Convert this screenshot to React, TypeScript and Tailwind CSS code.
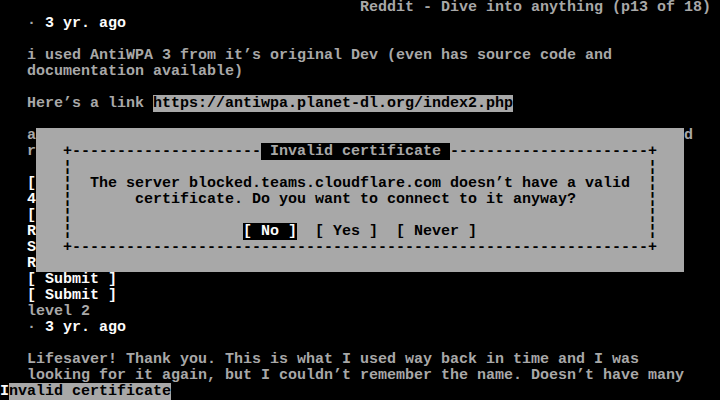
const dim = "text-[#a8a8a8]";
const bright = "text-[#fcfcfc]";

function Line({ children }: { children?: React.ReactNode }) {
  return <div className="h-4 leading-4 whitespace-pre">{children ?? " "}</div>;
}

const bar = "¦";

export default function App() {
  return (
    <div
      className={`relative w-[720px] h-[400px] overflow-hidden bg-black ${dim} text-[15px] font-bold`}
      style={{ fontFamily: '"Liberation Mono", "DejaVu Sans Mono", monospace' }}
    >
      {/* page text */}
      <Line>{" ".repeat(40)}Reddit - Dive into anything (p13 of 18)</Line>
      <Line>
        {"   · "}
        <span className={bright}>3 yr. ago</span>
      </Line>
      <Line />
      <Line>{"   i used AntiWPA 3 from it’s original Dev (even has source code and"}</Line>
      <Line>{"   documentation available)"}</Line>
      <Line />
      <Line>
        {"   Here’s a link "}
        <span className="bg-[#a8a8a8] text-black">https://antiwpa.planet-dl.org/index2.php</span>
      </Line>
      <Line />
      <Line>{"   a" + " ".repeat(72) + "d"}</Line>
      <Line>{"   r"}</Line>
      <Line />
      <Line><span className={bright}>{"   ["}</span></Line>
      <Line><span className={bright}>{"   4"}</span></Line>
      <Line><span className={bright}>{"   ["}</span></Line>
      <Line><span className={bright}>{"   R"}</span></Line>
      <Line><span className={bright}>{"   S"}</span></Line>
      <Line><span className={bright}>{"   R"}</span></Line>
      <Line><span className={bright}>{"   [ Submit ]"}</span></Line>
      <Line><span className={bright}>{"   [ Submit ]"}</span></Line>
      <Line>{"   level 2"}</Line>
      <Line>
        {"   · "}
        <span className={bright}>3 yr. ago</span>
      </Line>
      <Line />
      <Line>{"   Lifesaver! Thank you. This is what I used way back in time and I was"}</Line>
      <Line>{"   looking for it again, but I couldn’t remember the name. Doesn’t have many"}</Line>
      <Line>
        <span className="bg-black text-[#fcfcfc]">I</span>
        <span className="bg-[#a8a8a8] text-black">nvalid certificate</span>
      </Line>

      {/* dialog over the page */}
      <div className="absolute left-[36px] top-[128px] w-[648px] h-[144px] bg-[#a8a8a8] text-black">
        <Line />
        <Line>
          {"   +" + "-".repeat(21)}
          <span className="bg-black text-[#a8a8a8]"> Invalid certificate </span>
          {"-".repeat(22) + "+"}
        </Line>
        <Line>{"   " + bar + " ".repeat(64) + bar}</Line>
        <Line>{"   " + bar + "  The server blocked.teams.cloudflare.com doesn’t have a valid  " + bar}</Line>
        <Line>{"   " + bar + "       certificate. Do you want to connect to it anyway?        " + bar}</Line>
        <Line>{"   " + bar + " ".repeat(64) + bar}</Line>
        <Line>
          {"   " + bar + " ".repeat(19)}
          <span className="bg-black text-[#fcfcfc]">[ No ]</span>
          {"  [ Yes ]  [ Never ]" + " ".repeat(19) + bar}
        </Line>
        <Line>{"   +" + "-".repeat(64) + "+"}</Line>
        <Line />
      </div>
    </div>
  );
}
